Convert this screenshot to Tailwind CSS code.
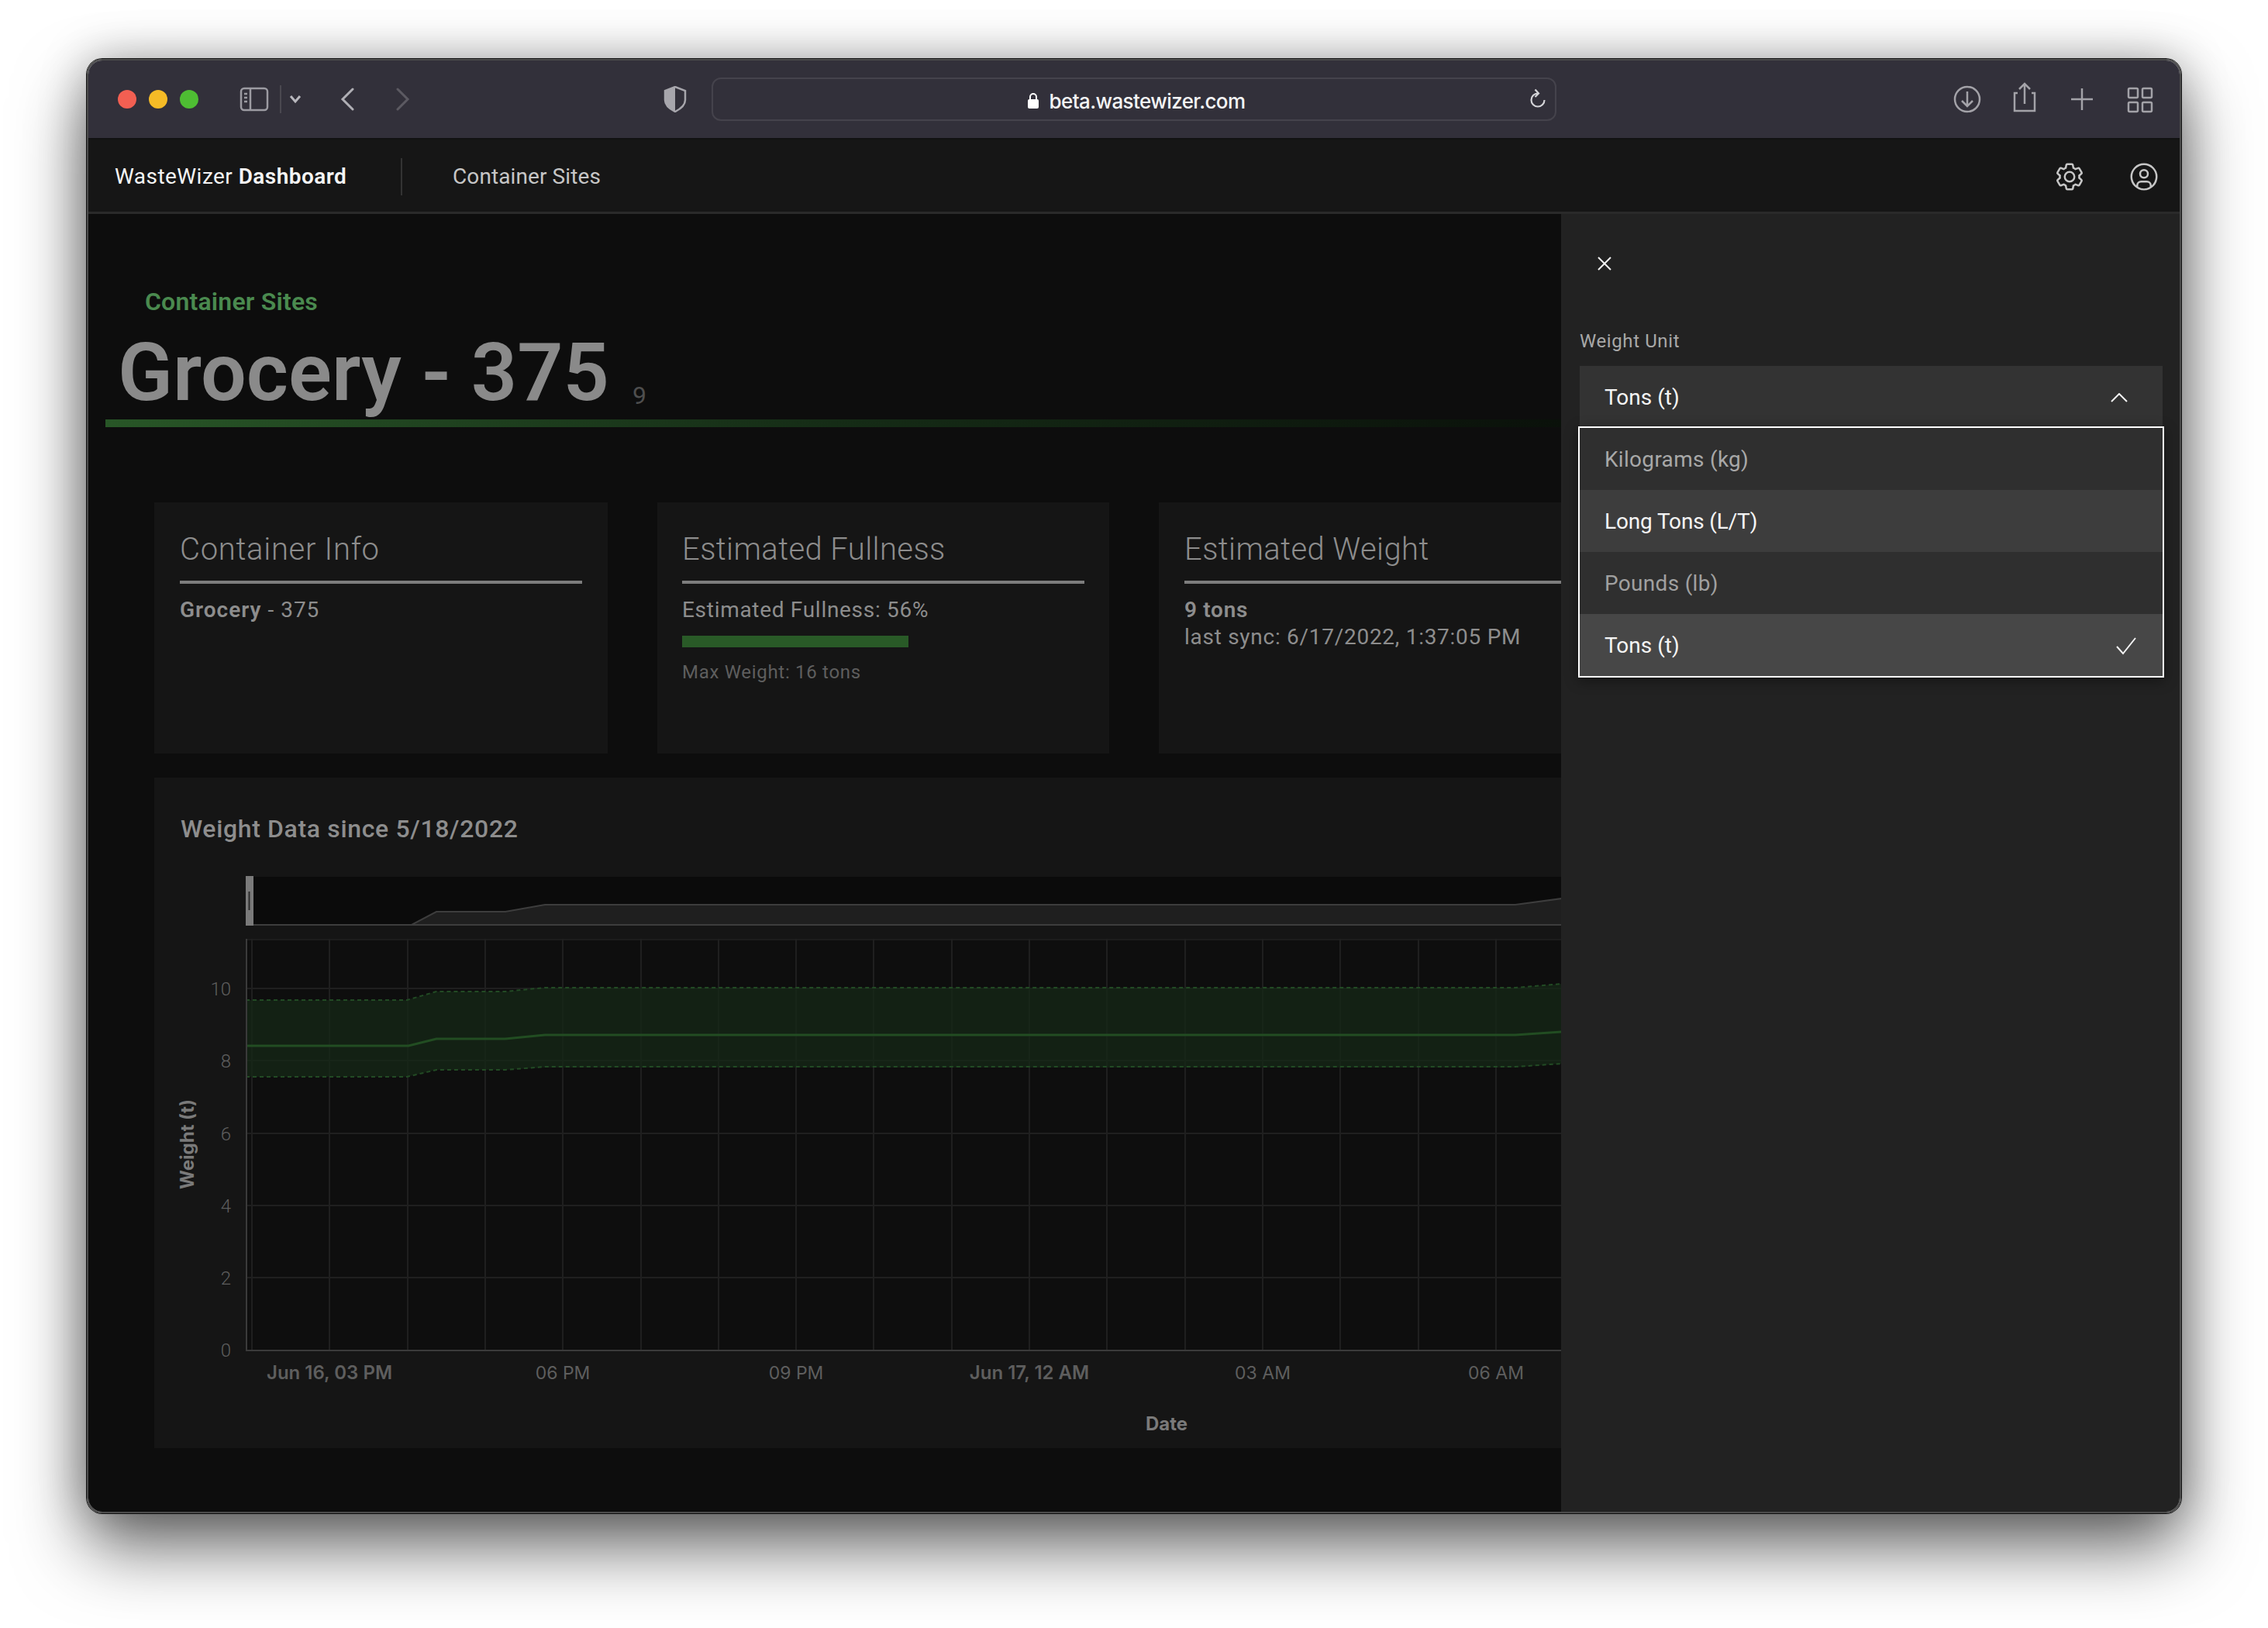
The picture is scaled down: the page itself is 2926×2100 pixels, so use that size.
<!DOCTYPE html>
<html lang="en">
  <head>
    <meta charset="UTF-8" />
    <title>WasteWizer Dashboard</title>
    <script src="https://cdn.jsdelivr.net/npm/@tailwindcss/browser@4"></script>
  </head>
  <body class="bg-white w-[2926px] h-[2100px] overflow-hidden [font-family:Roboto,sans-serif]">
    <div class="ml-[112px] mt-[76px] w-[2702px] h-[1876px] flex flex-col rounded-[20px] overflow-hidden border-2 border-[#4c4c4c] shadow-[0_44px_90px_rgba(0,0,0,0.58),0_0_60px_rgba(0,0,0,0.28),0_0_0_1px_#1c1c1c]">
      <!-- safari toolbar -->
      <div class="h-[102px] shrink-0 bg-[#32303a] border-b-2 border-[#121212] flex items-center relative">
        <div class="flex gap-[16px] ml-[38px]">
          <span class="w-[24px] h-[24px] rounded-full bg-[#f25f52]"></span>
          <span class="w-[24px] h-[24px] rounded-full bg-[#f5bb26]"></span>
          <span class="w-[24px] h-[24px] rounded-full bg-[#4ebd33]"></span>
        </div>
        <svg class="ml-[53px]" width="38" height="32" viewBox="0 0 38 32" fill="none" stroke="#9c9ba2" stroke-width="2.5"><rect x="2" y="2" width="34" height="28" rx="4" /><path d="M14 2v28M6 9h4M6 14h4M6 19h4" /></svg>
        <span class="ml-[14px] w-[2px] h-[36px] bg-[#4a4850]"></span>
        <svg class="ml-[10px]" width="16" height="12" viewBox="0 0 16 12" fill="none" stroke="#b8b7bd" stroke-width="3"><path d="M2 2l6 7 6-7" /></svg>
        <svg class="ml-[49px]" width="20" height="30" viewBox="0 0 20 30" fill="none" stroke="#b0afb5" stroke-width="3" stroke-linecap="round"><path d="M17 2L4 15l13 13" /></svg>
        <svg class="ml-[52px]" width="20" height="30" viewBox="0 0 20 30" fill="none" stroke="#5c5a62" stroke-width="3" stroke-linecap="round"><path d="M3 2l13 13L3 28" /></svg>
        <svg class="ml-[326px]" width="30" height="34" viewBox="0 0 30 34" fill="none"><path d="M15 1L2 6v12c0 7 7 12 13 15 6-3 13-8 13-15V6z" fill="#32303a" stroke="#a7a6ac" stroke-width="2.5" /><path d="M15 1L2 6v12c0 7 7 12 13 15z" fill="#a7a6ac" /></svg>
        <div class="ml-[32px] w-[1090px] h-[56px] rounded-[12px] border-2 border-[#45434c] flex items-center justify-center pt-[4px] pl-[5px] relative">
          <svg width="16" height="22" viewBox="0 0 16 22" fill="none"><path d="M4 10V6a4 4 0 018 0v4" stroke="#fff" stroke-width="2" /><rect x="1" y="9" width="14" height="12" rx="2" fill="#fff" /></svg>
          <span class="ml-[13px] text-[26px] font-medium text-[#f4f4f5] [font-family:Inter,sans-serif] tracking-[-0.6px]">beta.wastewizer.com</span>
          <svg class="absolute right-[10px] top-[12px]" width="24" height="28" viewBox="0 0 24 28" fill="none" stroke="#d4d4d8" stroke-width="2.2"><path d="M20.500 15a8.500 8.500 0 11-8.500-8.500M8.500 1.500l4.500 5-4.500 4.500" /></svg>
        </div>
        <div class="absolute right-[0] top-[0] h-full">
          <svg width="300" height="100" viewBox="2512 78 300 100" fill="none" stroke="#a3a2a8" stroke-width="2.5">
            <circle cx="2538" cy="128" r="16" />
            <path d="M2538 118v18M2531 130l7 7 7-7" />
            <path d="M2604 120h-4v23h26v-23h-4M2613 134v-26M2606 115l7-7 7 7" transform="translate(-1 0)" />
            <path d="M2686 114v28M2672 128h28" />
            <rect x="2746" y="114" width="12" height="12" rx="1.500" /><rect x="2764" y="114" width="12" height="12" rx="1.500" /><rect x="2746" y="132" width="12" height="12" rx="1.500" /><rect x="2764" y="132" width="12" height="12" rx="1.500" />
          </svg>
        </div>
      </div>

      <!-- app header -->
      <header class="h-[96px] shrink-0 bg-[#161616] border-b-[3px] border-[#2a2a2a] pt-[3px] flex items-center text-[28px] leading-[36px]">
        <div class="pl-[34px] w-[403px] text-[#f4f4f4] tracking-[0.45px]">WasteWizer <b class="font-semibold">Dashboard</b></div>
        <span class="w-[2px] h-[48px] bg-[#333]"></span>
        <div class="ml-[65px] text-[#c6c6c6] tracking-[0.1px]">Container Sites</div>
        <div class="ml-auto flex items-center gap-[56px] mr-[26px] text-[#c6c6c6]">
          <svg width="40" height="40" viewBox="0 0 32 32" fill="currentColor"><path d="M27,16.76c0-.25,0-.5,0-.76s0-.51,0-.77l1.92-1.68A2,2,0,0,0,29.3,11L26.94,7a2,2,0,0,0-1.73-1,2,2,0,0,0-.64.1l-2.43.82a11.35,11.35,0,0,0-1.31-.75l-.51-2.52a2,2,0,0,0-2-1.61H13.64a2,2,0,0,0-2,1.61l-.51,2.52a11.48,11.48,0,0,0-1.32.75L7.43,6.06A2,2,0,0,0,6.79,6,2,2,0,0,0,5.06,7L2.7,11a2,2,0,0,0,.41,2.51L5,15.24c0,.25,0,.5,0,.76s0,.51,0,.77L3.11,18.45A2,2,0,0,0,2.7,21L5.06,25a2,2,0,0,0,1.73,1,2,2,0,0,0,.64-.1l2.43-.82a11.35,11.35,0,0,0,1.31.75l.51,2.52a2,2,0,0,0,2,1.61h4.72a2,2,0,0,0,2-1.61l.51-2.52a11.48,11.48,0,0,0,1.32-.75l2.42.82a2,2,0,0,0,.64.1,2,2,0,0,0,1.73-1L29.3,21a2,2,0,0,0-.41-2.51ZM25.21,24l-3.43-1.16a8.86,8.86,0,0,1-2.71,1.57L18.36,28H13.64l-.71-3.55a9.36,9.36,0,0,1-2.7-1.57L6.79,24,4.43,20l2.72-2.4a8.9,8.9,0,0,1,0-3.13L4.43,12,6.79,8l3.43,1.16a8.86,8.86,0,0,1,2.71-1.57L13.64,4h4.72l.71,3.55a9.36,9.36,0,0,1,2.7,1.57L25.21,8,27.57,12l-2.72,2.4a8.9,8.9,0,0,1,0,3.13L27.57,20Z" /><path d="M16,22a6,6,0,1,1,6-6A5.94,5.94,0,0,1,16,22Zm0-10a3.91,3.91,0,0,0-4,4,3.91,3.91,0,0,0,4,4,3.91,3.91,0,0,0,4-4A3.91,3.91,0,0,0,16,12Z" /></svg>
          <svg width="40" height="40" viewBox="0 0 32 32" fill="currentColor"><path d="M16,8a5,5,0,1,0,5,5A5,5,0,0,0,16,8Zm0,8a3,3,0,1,1,3-3A3,3,0,0,1,16,16Z" /><path d="M16,2A14,14,0,1,0,30,16,14.0158,14.0158,0,0,0,16,2ZM10,26.3765V25a3.0033,3.0033,0,0,1,3-3h6a3.0033,3.0033,0,0,1,3,3v1.3765a11.8989,11.8989,0,0,1-12,0Zm13.9925-1.4507A5.0016,5.0016,0,0,0,19,20H13a5.0016,5.0016,0,0,0-4.9925,4.9258,12,12,0,1,1,15.985,0Z" /></svg>
        </div>
      </header>

      <div class="flex-1 flex min-h-0">
        <!-- page content, dimmed behind the side panel -->
        <main class="w-[1900px] shrink-0 bg-[#0d0d0d] overflow-hidden">
          <div class="mt-[93px] pl-[73px] h-[40px] text-[32px] leading-[40px] font-semibold text-[#4a8a4f] tracking-[0.2px]">Container Sites</div>
          <div class="mt-[16px] pl-[38px] h-[112px] flex items-end text-[#8a8a8a]">
            <h1 class="text-[104px] leading-[112px] font-semibold tracking-[0px]">Grocery - 375</h1>
            <span class="ml-[30px] mb-[7px] text-[32px] leading-[40px] text-[#4e4e4e]">9</span>
          </div>
          <div class="ml-[22px] mt-[4px] h-[10px] bg-linear-to-r from-[#285627] via-[#152c16] to-[#0a110a]"></div>

          <div class="pl-[85px] mt-[97px] flex gap-[64px] w-[2100px]">
            <section class="w-[585px] h-[324px] shrink-0 bg-[#151515] px-[33px] pt-[34px]">
              <h2 class="text-[40px] leading-[54px] font-light text-[#8d8d8d] tracking-[0.7px] pb-[13px] border-b-[4px] border-[#7d7d7d]">Container Info</h2>
              <p class="mt-[16px] text-[28px] leading-[35px] text-[#8d8d8d] tracking-[1px]"><b class="font-semibold">Grocery</b> - 375</p>
            </section>
            <section class="w-[583px] h-[324px] shrink-0 bg-[#151515] px-[32px] pt-[34px]">
              <h2 class="text-[40px] leading-[54px] font-light text-[#8d8d8d] tracking-[0.4px] pb-[13px] border-b-[4px] border-[#7d7d7d]">Estimated Fullness</h2>
              <p class="mt-[16px] text-[28px] leading-[35px] text-[#8d8d8d] tracking-[0.7px]">Estimated Fullness: 56%</p>
              <div class="mt-[16px] w-[292px] h-[15px] bg-[#295a27]"></div>
              <p class="mt-[16px] text-[24px] leading-[32px] text-[#5e5e5e] tracking-[0.7px]">Max Weight: 16 tons</p>
            </section>
            <section class="w-[585px] h-[324px] shrink-0 bg-[#151515] px-[33px] pt-[34px]">
              <h2 class="text-[40px] leading-[54px] font-light text-[#8d8d8d] tracking-[0.4px] pb-[13px] border-b-[4px] border-[#7d7d7d]">Estimated Weight</h2>
              <p class="mt-[16px] text-[28px] leading-[35px] text-[#8d8d8d] tracking-[0.7px] font-semibold">9 tons</p>
              <p class="text-[28px] leading-[35px] text-[#8d8d8d] tracking-[0.72px]">last sync: 6/17/2022, 1:37:05 PM</p>
            </section>
          </div>

          <section class="ml-[85px] mt-[31px] w-[1900px] h-[865px] bg-[#151515]">
            <h2 class="pl-[34px] pt-[44px] h-[107px] text-[32px] leading-[44px] font-medium text-[#8d8d8d] tracking-[0.65px]">Weight Data since 5/18/2022</h2>
            <!-- viewBox uses the same numbers as the plot's page position -->
            <svg class="block" width="1900" height="758" viewBox="199 1110 1900 758" fill="none">
              <rect x="317" y="1131" width="1782" height="63" fill="#0b0b0b" />
              <path d="M327 1193H531L563 1176H652L703 1167H1955L2015 1159V1193Z" fill="#1f1f1f" />
              <path d="M327 1193H531L563 1176H652L703 1167H1955L2015 1159M531 1193H2015" stroke="#3d3d3d" stroke-width="2" />
              <rect x="317" y="1130" width="10" height="64" fill="#7a7a7a" />
              <rect x="320.500" y="1150" width="2" height="24" fill="#2a2a2a" />

              <rect x="317" y="1211" width="1782" height="530" fill="#0e0e0e" />
              <path d="M317 1212H2099" stroke="#1c1c1c" stroke-width="2" />
              <g stroke="#1f1f1f" stroke-width="2">
                <path d="M317 1275H2099M317 1368H2099M317 1462H2099M317 1555H2099M317 1648H2099" />
                <path d="M325 1211V1741M425 1211V1741M526 1211V1741M626 1211V1741M726 1211V1741M827 1211V1741M927 1211V1741M1027 1211V1741M1127 1211V1741M1228 1211V1741M1328 1211V1741M1428 1211V1741M1529 1211V1741M1629 1211V1741M1729 1211V1741M1830 1211V1741M1930 1211V1741" />
              </g>
              <path d="M317 1290H525L563 1279H652L703 1274H1955L2015 1269V1372L1955 1377H703L652 1380H563L525 1389H317Z" fill="#152716" fill-opacity="0.8" />
              <path d="M317 1290H525L563 1279H652L703 1274H1955L2015 1269M317 1389H525L563 1380H652L703 1376H1955L2015 1372" stroke="#224a24" stroke-width="2" stroke-dasharray="5 4" />
              <path d="M317 1349H527L563 1340H652L703 1335H1955L2015 1331" stroke="#224d22" stroke-width="3" />
              <path d="M318 1211V1742H2099" stroke="#3a3a3a" stroke-width="2" />

              <g fill="#5e5e5e" font-size="24" text-anchor="end" font-family="Roboto, sans-serif" font-weight="300">
                <text x="298" y="1284">10</text>
                <text x="298" y="1377">8</text>
                <text x="298" y="1471">6</text>
                <text x="298" y="1564">4</text>
                <text x="298" y="1657">2</text>
                <text x="298" y="1750">0</text>
              </g>
              <g fill="#5e5e5e" font-size="23" text-anchor="middle" font-family="Inter, sans-serif">
                <text x="425" y="1779" font-size="24" font-weight="600">Jun 16, 03 PM</text>
                <text x="726" y="1779">06 PM</text>
                <text x="1027" y="1779">09 PM</text>
                <text x="1328" y="1779" font-size="24" font-weight="600">Jun 17, 12 AM</text>
                <text x="1629" y="1779">03 AM</text>
                <text x="1930" y="1779">06 AM</text>
              </g>
              <text x="1505" y="1845" fill="#7a7a7a" font-size="24" font-weight="700" text-anchor="middle" font-family="Inter, sans-serif">Date</text>
              <text transform="translate(250 1476) rotate(-90)" fill="#7a7a7a" font-size="24" font-weight="700" text-anchor="middle" font-family="Inter, sans-serif">Weight (t)</text>
            </svg>
          </section>
        </main>

        <!-- settings panel -->
        <aside class="flex-1 bg-[#222222] pl-[24px] pr-[22px] relative">
          <svg class="absolute left-[46px] top-[54px] text-[#f4f4f4]" width="20" height="20" viewBox="0 0 20 20" fill="none" stroke="currentColor" stroke-width="2"><path d="M2 2l16 16M18 2L2 18" /></svg>
          <label class="block pt-[148px] h-[196px] text-[24px] leading-[32px] text-[#a8a8a8] tracking-[0.6px]">Weight Unit</label>
          <div class="h-[80px] bg-[#333333] flex items-center pl-[32px] pr-[45px] pt-[2px] text-[28px] text-[#f4f4f4]">
            Tons (t)
            <svg class="ml-auto" width="22" height="12" viewBox="0 0 22 12" fill="none" stroke="#f4f4f4" stroke-width="2"><path d="M1 11L11 1l10 10" /></svg>
          </div>
          <ul class="relative -mx-[2px] -mt-[2px] border-[2px] border-white text-[28px] shadow-[0_4px_16px_rgba(0,0,0,0.4)]">
            <li class="h-[80px] bg-[#2f2f2f] flex items-center pl-[32px] pt-[2px] text-[#a8a8a8] tracking-[0.3px]">Kilograms (kg)</li>
            <li class="h-[80px] bg-[#3d3d3d] flex items-center pl-[32px] pt-[2px] text-[#f4f4f4] tracking-[-0.15px]">Long Tons (L/T)</li>
            <li class="h-[80px] bg-[#2f2f2f] flex items-center pl-[32px] pt-[2px] text-[#a0a0a0] tracking-[0.3px]">Pounds (lb)</li>
            <li class="h-[80px] bg-[#474747] flex items-center pl-[32px] pr-[34px] pt-[2px] text-[#f4f4f4]">
              Tons (t)
              <svg class="ml-auto" width="26" height="24" viewBox="0 0 26 24" fill="none" stroke="#f4f4f4" stroke-width="2"><path d="M1 13l8 9L25 2" /></svg>
            </li>
          </ul>
        </aside>
      </div>
    </div>
  </body>
</html>
